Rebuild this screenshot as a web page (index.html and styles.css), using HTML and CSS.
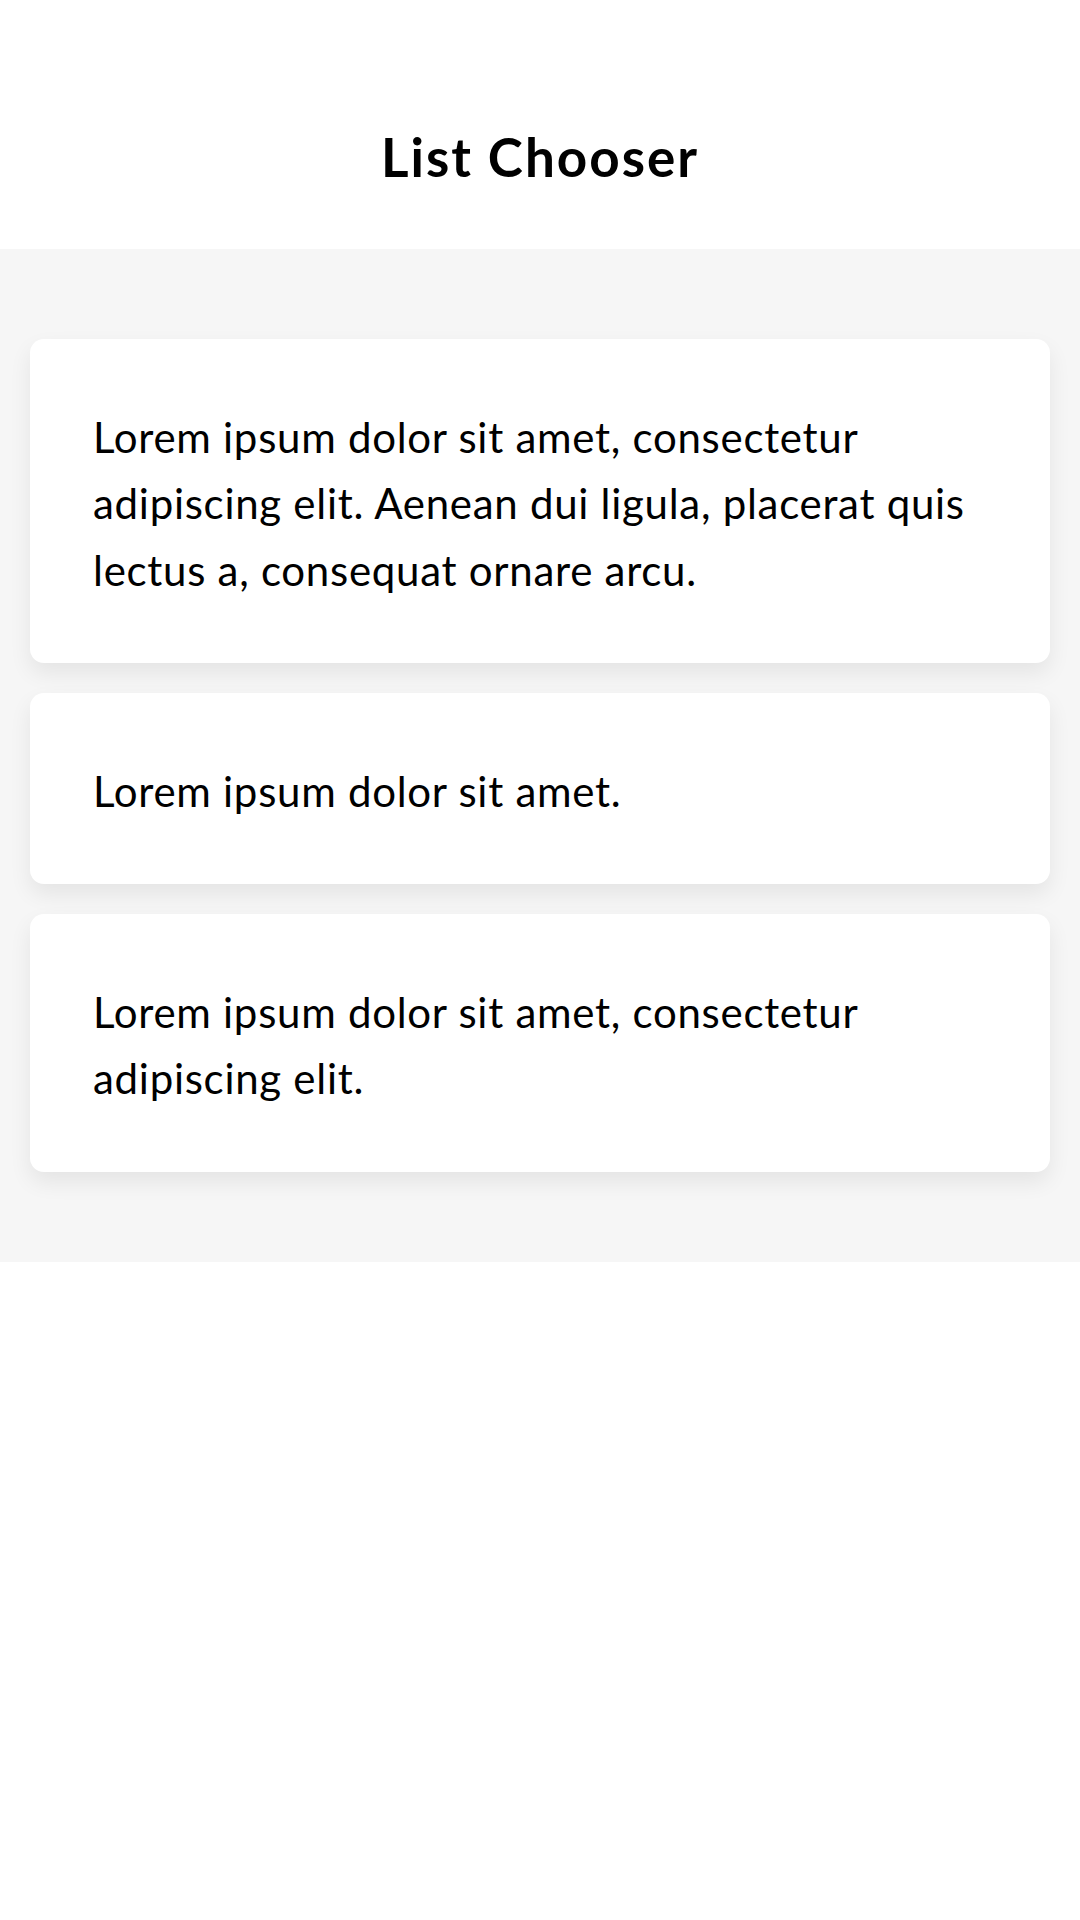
FILE: index.html
```html
<!DOCTYPE html>
<html>
<head>
<meta charset="utf-8">
<link rel="stylesheet" href="styles.css">
</head>
<body>
<header class="header"><h1 class="title">List Chooser</h1></header>
<main class="list">
  <div class="card"><p class="card-text">Lorem ipsum dolor sit amet, consectetur adipiscing elit. Aenean dui ligula, placerat quis lectus a, consequat ornare arcu.</p></div>
  <div class="card"><p class="card-text">Lorem ipsum dolor sit amet.</p></div>
  <div class="card"><p class="card-text">Lorem ipsum dolor sit amet, consectetur adipiscing elit.</p></div>
</main>
</body>
</html>
```
FILE: styles.css
```css
html, body { margin: 0; padding: 0; background: #ffffff; }
body { width: 1080px; height: 1920px; font-family: "Lato", "Noto Sans", sans-serif; color: #000; }
.header { height: 249px; display: flex; justify-content: center; box-sizing: border-box; padding-top: 124px; }
.title { margin: 0; font-size: 53px; font-weight: 700; line-height: 66px; letter-spacing: 2px; }
.list { background: #f6f6f6; padding: 90px 30px; display: flex; flex-direction: column; gap: 30px; }
.card { background: #fff; border-radius: 14px; box-shadow: 0 10px 22px rgba(0,0,0,0.075); padding: 64.75px 60px 59.75px 63px; }
.card-text { margin: 0; font-size: 42px; line-height: 66.5px; letter-spacing: 0.72px; }
```
